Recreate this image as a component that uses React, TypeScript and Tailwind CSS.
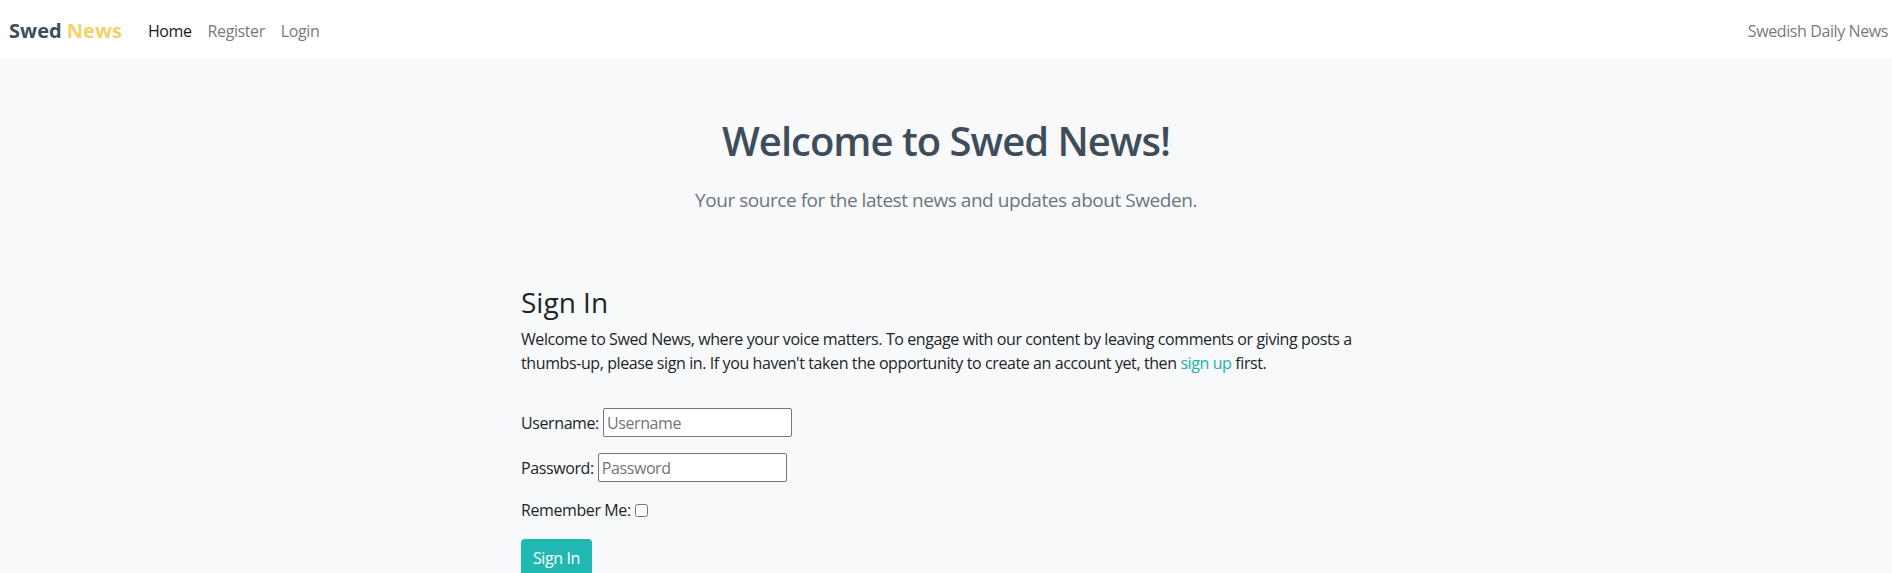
import React from 'react';

const NAV_LINKS = [
  { label: 'Home', active: true },
  { label: 'Register', active: false },
  { label: 'Login', active: false },
];

const Navbar: React.FC = () => {
  return (
    <nav className="h-[59px] bg-white flex items-center justify-between pl-[9px] pr-[4px] pt-[3px]">
      <div className="flex items-center">
        <a href="#" className="text-[20px] font-bold leading-none mr-[18px] text-[#3f4d5b]">
          Swed <span className="text-[#f2d36b]">News</span>
        </a>
        <ul className="flex items-center tracking-[-0.4px]">
          {NAV_LINKS.map((link) => (
            <li key={link.label}>
              <a
                href="#"
                className={
                  link.active
                    ? 'block px-2 text-[16px] text-[#1a1a1a]'
                    : 'block px-2 text-[16px] text-[#7a7a7a]'
                }
              >
                {link.label}
              </a>
            </li>
          ))}
        </ul>
      </div>
      <span className="text-[16px] tracking-[-0.4px] text-[#777b80]">Swedish Daily News</span>
    </nav>
  );
};

const Hero: React.FC = () => {
  return (
    <header className="text-center pt-[58px]">
      <h1 className="text-[40px] leading-[48px] font-semibold tracking-[-1px] text-[#3f4d5b]">
        Welcome to Swed News!
      </h1>
      <p className="mt-[20px] text-[19px] leading-[30px] tracking-[-0.45px] text-[#6c757d]">
        Your source for the latest news and updates about Sweden.
      </p>
    </header>
  );
};

const SignInForm: React.FC = () => {
  return (
    <section className="w-[850px] mx-auto mt-[70px] text-[#212529]">
      <h3 className="text-[28px] leading-[34px] font-medium">Sign In</h3>
      <p className="mt-[8px] text-[16px] leading-[24px] tracking-[-0.4px]">
        Welcome to Swed News, where your voice matters. To engage with our content by leaving comments or giving
        posts a thumbs-up, please sign in. If you haven't taken the opportunity to create an account yet, then{' '}
        <a href="#" className="text-[#20b2aa]">sign up</a> first.
      </p>

      <form className="mt-[33px] flex flex-col gap-[16px] text-[16px] tracking-[-0.4px]">
        <p className="flex items-center gap-[4px] h-[29px]">
          <label htmlFor="id_login">Username:</label>
          <input
            id="id_login"
            type="text"
            placeholder="Username"
            className="w-[189px] h-[29px] px-[3px] border border-[#767676] rounded-[2px] bg-white placeholder:text-[#757575] outline-none"
          />
        </p>
        <p className="flex items-center gap-[4px] h-[29px]">
          <label htmlFor="id_password">Password:</label>
          <input
            id="id_password"
            type="password"
            placeholder="Password"
            className="w-[189px] h-[29px] px-[3px] border border-[#767676] rounded-[2px] bg-white placeholder:text-[#757575] outline-none"
          />
        </p>
        <p className="flex items-center gap-[4px] h-[24px]">
          <label htmlFor="id_remember">Remember Me:</label>
          <input id="id_remember" type="checkbox" className="w-[13px] h-[13px]" />
        </p>
        <div className="mt-[1px]">
          <button type="button" className="h-[38px] px-[12px] rounded-[4px] bg-[#22b8b2] text-white text-[16px]">
            Sign In
          </button>
        </div>
      </form>
    </section>
  );
};

export default function App() {
  return (
    <div className="h-[573px] overflow-hidden bg-[#f8f9fa] font-['Open_Sans',sans-serif]">
      <Navbar />
      <Hero />
      <SignInForm />
    </div>
  );
}
